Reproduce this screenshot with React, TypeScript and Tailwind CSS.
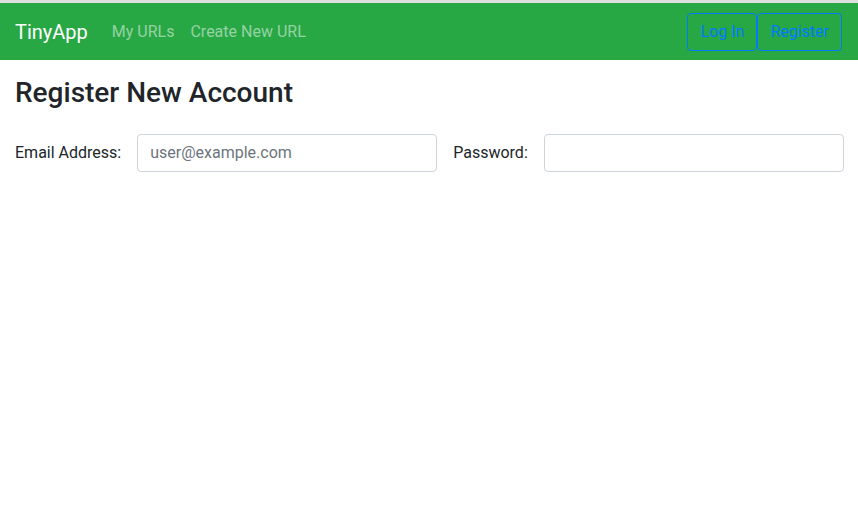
import React from "react"

export default function App() {
  return (
    <div className="min-h-screen bg-white font-['Roboto','Liberation_Sans',sans-serif] text-[#212529] text-[16px]">
      <div className="h-[3px] bg-[#dedede]" />

      {/* Navbar */}
      <nav className="flex items-center h-[57px] pt-px pl-[15px] pr-4 bg-[#28a745]">
        <a className="text-[20px] text-white mr-4 leading-[30px]">TinyApp</a>
        <a className="px-2 text-white/50 leading-6">My URLs</a>
        <a className="px-2 text-white/50 leading-6">Create New URL</a>
        <div className="ml-auto flex">
          <button className="h-[38px] px-3 border border-[#007bff] text-[#007bff] rounded-[4px] leading-6">
            Log In
          </button>
          <button className="h-[38px] px-3 border border-[#007bff] text-[#007bff] rounded-[4px] leading-6">
            Register
          </button>
        </div>
      </nav>

      <main className="pl-[15px] pr-4 pt-4">
        <h3 className="text-[28px] font-medium leading-[1.2]">Register New Account</h3>

        <form className="flex items-center mt-[24px]">
          <label className="leading-6 whitespace-nowrap">Email Address:</label>
          <input
            type="email"
            placeholder="user@example.com"
            className="mx-4 shrink-0 w-[300px] h-[38px] px-3 border border-[#ced4da] rounded-[4px] text-[#495057] placeholder:text-[#6c757d] outline-none"
          />
          <label className="leading-6 whitespace-nowrap">Password:</label>
          <input
            type="password"
            className="ml-4 shrink-0 w-[300px] h-[38px] px-3 border border-[#ced4da] rounded-[4px] outline-none"
          />
        </form>
      </main>
    </div>
  )
}
